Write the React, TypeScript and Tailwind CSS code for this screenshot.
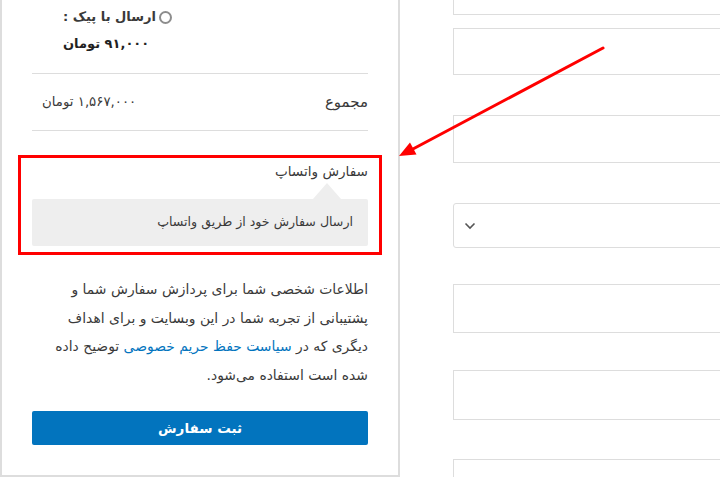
import React from "react";

export default function App() {
  const font = { fontFamily: '"DejaVu Sans", "Noto Sans", sans-serif' };
  return (
    <div className="relative w-[720px] h-[477px] overflow-hidden bg-white text-[#3a3a3a]" style={font}>
      <div className="flex h-full">
        {/* Left order panel */}
        <div className="w-[400px] h-[477px] shrink-0 border-l-2 border-r-2 border-b-2 border-[#dddddd] px-[30px]" dir="rtl">
          {/* shipping option */}
          <div className="flex flex-col items-end pl-[31px]">
            <div className="h-[34px] flex items-center gap-[3px] text-[13px] font-bold">
              <span className="w-[13px] h-[13px] rounded-full border-2 border-[#8d8d8d] bg-white"></span>
              <span>ارسال با پیک :</span>
            </div>
            <div className="h-[20px] flex items-center text-[13px] font-bold text-[#222]">
              <span>۹۱,۰۰۰ تومان</span>
            </div>
          </div>
          <div className="mt-[19px] border-t border-[#dddddd]"></div>
          <div className="h-[56px] flex items-center justify-between">
            <span className="text-[15px]">مجموع</span>
            <span className="pl-[10px] text-[13.3px]">۱,۵۶۷,۰۰۰ تومان</span>
          </div>
          <div className="border-t border-[#dddddd]"></div>

          {/* whatsapp option (highlighted) */}
          <div className="mt-[24px] -mx-[14px] h-[100px] border-[3px] border-[#ff0000] px-[11px]">
            <div className="h-[25px] flex items-end text-[13.6px] pb-[2px]">سفارش واتساپ</div>
            <div className="h-[16px] flex justify-start pr-[27px]">
              <div className="w-0 h-0 border-l-[14px] border-r-[14px] border-b-[16px] border-l-transparent border-r-transparent border-b-[#eeeeee]"></div>
            </div>
            <div className="h-[47px] rounded-[2px] bg-[#eeeeee] flex items-center pr-[15px] text-[12.6px]">
              ارسال سفارش خود از طریق واتساپ
            </div>
          </div>

          <p className="mt-[20px] text-[13.9px] leading-[28.5px] text-[#3a3a3a]">
            اطلاعات شخصی شما برای پردازش سفارش شما و
            <br />
            پشتیبانی از تجربه شما در این وبسایت و برای اهداف
            <br />
            دیگری که در <span className="text-[#0274be]">سیاست حفظ حریم خصوصی</span> توضیح داده
            <br />
            شده است استفاده می‌شود.
          </p>

          <button className="mt-[22px] w-full h-[34px] rounded-[2px] bg-[#0274be] text-white text-[13.5px] font-bold flex items-center justify-center">
            ثبت سفارش
          </button>
        </div>

        {/* Right form fields */}
        <div className="flex-1 pl-[53px]">
          <div className="-mt-[33px] h-[48px] w-[400px] border border-[#dddddd]"></div>
          <div className="mt-[13px] h-[47px] w-[400px] border border-[#dddddd]"></div>
          <div className="mt-[40px] h-[48px] w-[400px] border border-[#dddddd]"></div>
          <div className="mt-[40px] h-[45px] w-[400px] border border-[#dddddd] rounded-[3px] flex items-center pl-[10px]">
            <svg width="12" height="8" viewBox="0 0 12 8" fill="none">
              <path d="M1.5 1.5 L6 6 L10.5 1.5" stroke="#555" strokeWidth="1.6" />
            </svg>
          </div>
          <div className="mt-[36px] h-[49px] w-[400px] border border-[#dddddd]"></div>
          <div className="mt-[37px] h-[50px] w-[400px] border border-[#dddddd]"></div>
          <div className="mt-[39px] h-[48px] w-[400px] border border-[#dddddd]"></div>
        </div>
      </div>

      {/* red annotation arrow */}
      <svg className="absolute left-0 top-0 pointer-events-none" width="720" height="477" viewBox="0 0 720 477">
        <line x1="603" y1="48" x2="412" y2="149.5" stroke="#ff0000" strokeWidth="3" strokeLinecap="round" />
        <polygon points="399,156 416.5,154.5 410,142.5" fill="#ff0000" />
      </svg>
    </div>
  );
}
